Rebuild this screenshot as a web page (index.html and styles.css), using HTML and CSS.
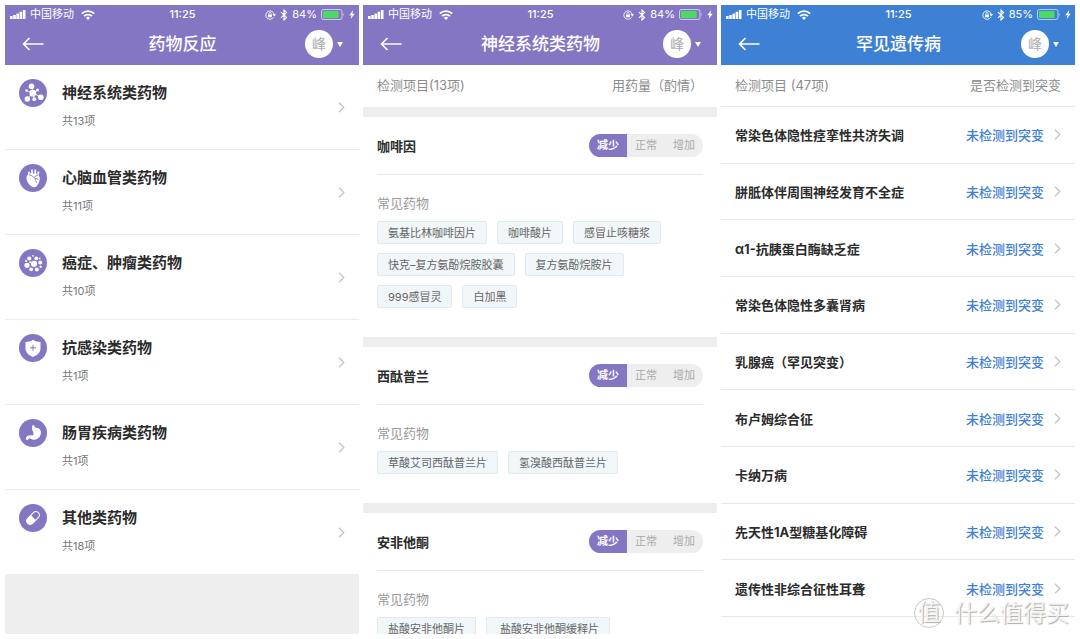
FILE: index.html
```html
<!DOCTYPE html>
<html lang="zh-CN">
<head>
<meta charset="utf-8">
<title>基因检测报告</title>
<link rel="stylesheet" href="styles.css">
</head>
<body>
<svg class="defs" aria-hidden="true">
  <symbol id="signal" viewBox="0 0 16 9"><path d="M0 6h2.600v3H0zM3.200 5h2.600v4H3.200zM6.400 3.500H9V9H6.400zM9.600 1.800h2.600V9H9.600zM12.900 0h2.600v9h-2.600z" fill="#fff"/></symbol>
  <symbol id="wifi" viewBox="0 0 14 10"><g fill="none" stroke="#fff" stroke-width="1.700"><path d="M.8 3.700a8.900 8.900 0 0 1 12.400 0"/><path d="M3 6.200a5.700 5.700 0 0 1 8 0"/></g><path d="M4.900 7.700a3 3 0 0 1 4.200 0L7 10z" fill="#fff"/></symbol>
  <symbol id="lock" viewBox="0 0 11 10"><path d="M8.700 7.200A4.200 4.200 0 1 1 9.200 4.500" fill="none" stroke="#fff" stroke-width=".9"/><path d="M7.500 4.300H11L9.300 6.500z" fill="#fff"/><path d="M3.100 4.600h3.800v2.700H3.100z" fill="#fff"/><path d="M3.900 4.700V3.600a1.100 1.100 0 0 1 2.200 0v1.100" fill="none" stroke="#fff" stroke-width=".8"/></symbol>
  <symbol id="bluetooth" viewBox="0 0 8 12"><path d="M1 3.200l5.600 5.300L4 11V1l2.600 2.500L1 8.800" fill="none" stroke="#fff" stroke-width="1.100"/></symbol>
  <symbol id="battery" viewBox="0 0 24 11"><rect x=".5" y=".5" width="20.500" height="10" rx="2" fill="none" stroke="#fff" stroke-opacity=".6"/><rect x="2" y="2" width="15.500" height="7" fill="#4cd964"/><path d="M22 4q1.500 1.500 0 3z" fill="#fff" fill-opacity=".7"/></symbol>
  <symbol id="bolt" viewBox="0 0 6 9"><path d="M4.300 0L.3 5.200h2.200L1.700 9l4-5.300H3.400z" fill="#fff"/></symbol>
  <symbol id="back" viewBox="0 0 22 14"><path d="M21.500 7H1.500M7.500 1l-6 6 6 6" fill="none" stroke="#fff" stroke-width="1.600"/></symbol>
  <symbol id="chevron" viewBox="0 0 7 11"><path d="M1 .8l4.800 4.700L1 10.200" fill="none" stroke="#c4c4c4" stroke-width="1.300"/></symbol>
  <symbol id="molecule" viewBox="0 0 28 28"><circle cx="14" cy="14" r="14"/><g fill="#fff" stroke="#fff"><path d="M13.800 14.200L12.500 7M13.800 14.200l9 4M13.800 14.200l-6 5.800M13.800 14.200l-6.300-2.600M13.800 14.200l5-3M13.800 14.200l1.500 6" fill="none" stroke-width=".8"/><g stroke="none"><circle cx="12.500" cy="7.200" r="2.800"/><circle cx="21.800" cy="18.200" r="2.800"/><circle cx="8.300" cy="20" r="2.700"/><circle cx="13.800" cy="14.200" r="3.400"/><circle cx="7.500" cy="11.500" r="1.300"/><circle cx="18.500" cy="11" r="1.500"/><circle cx="15.300" cy="20.200" r="1.900"/></g></g></symbol>
  <symbol id="heart" viewBox="0 0 28 28"><circle cx="14" cy="14" r="14"/><path d="M10 12V7.700M13 10V5.500M16.300 10V5.500M18.800 11.500l.8-4" fill="none" stroke="#fff" stroke-width="1.700"/><path d="M7.500 14c0-3.500 3.500-5 6-4.300 2.500-.7 6.500-.2 7.200 3.800.6 4-2.400 9.500-5.200 9.700-3.500.2-8-4.700-8-9.200z" fill="#fff"/><path d="M10 10.800c4.500.4 4.500 4.200 9.500 4.400M16.200 14.600c0 2.200 1.300 2.600 1.700 4.200M15.500 12.700l4-2" fill="none" stroke="#8576c3" stroke-width=".9"/></symbol>
  <symbol id="cells" viewBox="0 0 28 28"><circle cx="14" cy="14" r="14"/><g fill="#fff"><circle cx="10.300" cy="9.500" r="2.100"/><circle cx="17.300" cy="9.300" r="1.900"/><circle cx="14" cy="6.800" r=".9"/><circle cx="7" cy="12" r="1.100"/><circle cx="8" cy="16.300" r="2.600"/><circle cx="15" cy="14.800" r="3.100"/><circle cx="21.200" cy="13.500" r="2"/><circle cx="20.700" cy="9.500" r=".9"/><circle cx="12.200" cy="20.300" r="1.900"/><circle cx="17.800" cy="20.500" r="2"/><circle cx="21.600" cy="17.700" r="1.200"/><circle cx="11.200" cy="13.200" r="1"/></g></symbol>
  <symbol id="shield" viewBox="0 0 28 28"><circle cx="14" cy="14" r="14"/><path d="M14 5.800c2 1.500 4.500 2.200 7.500 2.200v6.500c0 4-3.500 6.900-7.500 8.500-4-1.600-7.500-4.500-7.500-8.500V8c3 0 5.500-.7 7.500-2.200z" fill="#fff"/><path d="M14 10.800v6M11 13.800h6" fill="none" stroke="#8576c3"/></symbol>
  <symbol id="stomach" viewBox="0 0 28 28"><circle cx="14" cy="14" r="14"/><path d="M13 6.700l2.300-.8c0 2 .9 2.900 3 3.100 3.600.4 4.300 4.300 3.100 7.300-1.600 4-6.300 5.500-9.400 3.700-1.700-.9-2.700-.4-3.300 1.300l-2-1c.4-3.700 2.800-4.600 5.200-4 2.500.5 3.200-1.200 2.200-3.600-1-1.800-1.300-3.500-1.100-6z" fill="#fff"/></symbol>
  <symbol id="pill" viewBox="0 0 28 28"><circle cx="14" cy="14" r="14"/><g transform="rotate(-45 14 14)"><rect x="6" y="10" width="16" height="8" rx="4" fill="#fff"/><path d="M14.500 11.100h3.700a2.900 2.900 0 0 1 0 5.800h-3.700z" fill="#8576c3"/></g></symbol>
</svg>

<main class="screens">
  <section class="screen">
    <header class="top">
      <div class="status"><div class="status-left"><svg class="i-signal"><use href="#signal"/></svg><span>中国移动</span><svg class="i-wifi"><use href="#wifi"/></svg></div><time>11:25</time><div class="status-right"><svg class="i-lock"><use href="#lock"/></svg><svg class="i-bt"><use href="#bluetooth"/></svg><span>84%</span><svg class="i-battery"><use href="#battery"/></svg><svg class="i-bolt"><use href="#bolt"/></svg></div></div>
      <div class="nav"><button class="back" aria-label="返回"><svg><use href="#back"/></svg></button><h1>药物反应</h1><button class="user"><span class="avatar">峰</span><span class="caret"></span></button></div>
    </header>
    <div class="categories">
      <a class="category" href="#"><svg class="badge"><use href="#molecule"/></svg><span class="copy"><strong>神经系统类药物</strong><small>共13项</small></span><svg class="chevron"><use href="#chevron"/></svg></a>
      <a class="category" href="#"><svg class="badge"><use href="#heart"/></svg><span class="copy"><strong>心脑血管类药物</strong><small>共11项</small></span><svg class="chevron"><use href="#chevron"/></svg></a>
      <a class="category" href="#"><svg class="badge"><use href="#cells"/></svg><span class="copy"><strong>癌症、肿瘤类药物</strong><small>共10项</small></span><svg class="chevron"><use href="#chevron"/></svg></a>
      <a class="category" href="#"><svg class="badge"><use href="#shield"/></svg><span class="copy"><strong>抗感染类药物</strong><small>共1项</small></span><svg class="chevron"><use href="#chevron"/></svg></a>
      <a class="category" href="#"><svg class="badge"><use href="#stomach"/></svg><span class="copy"><strong>肠胃疾病类药物</strong><small>共1项</small></span><svg class="chevron"><use href="#chevron"/></svg></a>
      <a class="category" href="#"><svg class="badge"><use href="#pill"/></svg><span class="copy"><strong>其他类药物</strong><small>共18项</small></span><svg class="chevron"><use href="#chevron"/></svg></a>
    </div>
    <div class="rest"></div>
  </section>

  <section class="screen">
    <header class="top">
      <div class="status"><div class="status-left"><svg class="i-signal"><use href="#signal"/></svg><span>中国移动</span><svg class="i-wifi"><use href="#wifi"/></svg></div><time>11:25</time><div class="status-right"><svg class="i-lock"><use href="#lock"/></svg><svg class="i-bt"><use href="#bluetooth"/></svg><span>84%</span><svg class="i-battery"><use href="#battery"/></svg><svg class="i-bolt"><use href="#bolt"/></svg></div></div>
      <div class="nav"><button class="back" aria-label="返回"><svg><use href="#back"/></svg></button><h1>神经系统类药物</h1><button class="user"><span class="avatar">峰</span><span class="caret"></span></button></div>
    </header>
    <div class="columns"><span>检测项目(13项)</span><span>用药量（酌情）</span></div>
    <article class="drug">
      <div class="drug-head"><h2>咖啡因</h2><div class="dose"><button class="on">减少</button><button>正常</button><button>增加</button></div></div>
      <h3>常见药物</h3>
      <ul class="tags"><li>氨基比林咖啡因片</li><li>咖啡酸片</li><li>感冒止咳糖浆</li><li>快克–复方氨酚烷胺胶囊</li><li>复方氨酚烷胺片</li><li>999感冒灵</li><li>白加黑</li></ul>
    </article>
    <article class="drug">
      <div class="drug-head"><h2>西酞普兰</h2><div class="dose"><button class="on">减少</button><button>正常</button><button>增加</button></div></div>
      <h3>常见药物</h3>
      <ul class="tags"><li>草酸艾司西酞普兰片</li><li>氢溴酸西酞普兰片</li></ul>
    </article>
    <article class="drug">
      <div class="drug-head"><h2>安非他酮</h2><div class="dose"><button class="on">减少</button><button>正常</button><button>增加</button></div></div>
      <h3>常见药物</h3>
      <ul class="tags"><li>盐酸安非他酮片</li><li>&nbsp;盐酸安非他酮缓释片</li></ul>
    </article>
  </section>

  <section class="screen blue">
    <header class="top">
      <div class="status"><div class="status-left"><svg class="i-signal"><use href="#signal"/></svg><span>中国移动</span><svg class="i-wifi"><use href="#wifi"/></svg></div><time>11:25</time><div class="status-right"><svg class="i-lock"><use href="#lock"/></svg><svg class="i-bt"><use href="#bluetooth"/></svg><span>85%</span><svg class="i-battery"><use href="#battery"/></svg><svg class="i-bolt"><use href="#bolt"/></svg></div></div>
      <div class="nav"><button class="back" aria-label="返回"><svg><use href="#back"/></svg></button><h1>罕见遗传病</h1><button class="user"><span class="avatar">峰</span><span class="caret"></span></button></div>
    </header>
    <div class="columns ruled"><span>检测项目 (47项)</span><span>是否检测到突变</span></div>
    <div class="diseases">
      <a class="disease" href="#"><strong>常染色体隐性痉挛性共济失调</strong><span>未检测到突变</span><svg class="chevron"><use href="#chevron"/></svg></a>
      <a class="disease" href="#"><strong>胼胝体伴周围神经发育不全症</strong><span>未检测到突变</span><svg class="chevron"><use href="#chevron"/></svg></a>
      <a class="disease" href="#"><strong>α1-抗胰蛋白酶缺乏症</strong><span>未检测到突变</span><svg class="chevron"><use href="#chevron"/></svg></a>
      <a class="disease" href="#"><strong>常染色体隐性多囊肾病</strong><span>未检测到突变</span><svg class="chevron"><use href="#chevron"/></svg></a>
      <a class="disease" href="#"><strong>乳腺癌（罕见突变）</strong><span>未检测到突变</span><svg class="chevron"><use href="#chevron"/></svg></a>
      <a class="disease" href="#"><strong>布卢姆综合征</strong><span>未检测到突变</span><svg class="chevron"><use href="#chevron"/></svg></a>
      <a class="disease" href="#"><strong>卡纳万病</strong><span>未检测到突变</span><svg class="chevron"><use href="#chevron"/></svg></a>
      <a class="disease" href="#"><strong>先天性1A型糖基化障碍</strong><span>未检测到突变</span><svg class="chevron"><use href="#chevron"/></svg></a>
      <a class="disease" href="#"><strong>遗传性非综合征性耳聋</strong><span>未检测到突变</span><svg class="chevron"><use href="#chevron"/></svg></a>
    </div>
  </section>
</main>
<div class="watermark"><span class="seal">值</span><span>什么值得买</span></div>
</body>
</html>
```
FILE: styles.css
```css
* { box-sizing: border-box; }
body {
  position: relative;
  margin: 0;
  height: 100vh;
  padding: 5px;
  background: #fff;
  font-family: Inter, "Noto Sans CJK SC", sans-serif;
  font-size: 13px;
  color: #2b2b2b;
}
.defs { position: absolute; width: 0; height: 0; }
svg { display: block; flex: none; }
h1, h2, h3, ul { margin: 0; padding: 0; }
button { border: 0; padding: 0; background: none; font: inherit; color: inherit; }
a { color: inherit; text-decoration: none; }

.screens { display: grid; grid-template-columns: repeat(3, 1fr); gap: 4px; height: 100%; }
.screen { --main: #8576c3; display: flex; flex-direction: column; min-width: 0; min-height: 0; overflow: hidden; }
.screen > * { flex: none; }
.blue { --main: #3e80d3; }

.top { background: var(--main); color: #fff; }
.status, .nav { display: grid; grid-template-columns: 1fr auto 1fr; align-items: center; }
.status { height: 19px; padding: 0 4px 0 5px; font-size: 11px; line-height: 19px; }
.status time { font-weight: 500; }
.status-left, .status-right { display: flex; align-items: center; }
.status-left { gap: 4px; }
.status-right { justify-content: flex-end; gap: 4px; }
.i-signal { width: 16px; height: 9px; }
.i-wifi { width: 14px; height: 10px; margin-left: 3px; }
.i-lock { width: 11px; height: 10px; }
.i-bt { width: 8px; height: 12px; }
.i-battery { width: 24px; height: 11px; }
.i-bolt { width: 6px; height: 9px; }

.nav { height: 41px; padding: 0 16px 1px 17px; }
.nav h1 { font-size: 17px; font-weight: 500; line-height: 24px; }
.back { justify-self: start; }
.back svg { width: 22px; height: 14px; }
.user { justify-self: end; display: flex; align-items: center; gap: 4px; }
.avatar { width: 28px; height: 28px; border-radius: 50%; background: #fff; color: #aaa; font-size: 14px; line-height: 28px; }
.caret { border: 3px solid transparent; border-top: 5px solid #fff; border-bottom: 0; }

.category { display: flex; align-items: flex-start; gap: 15px; padding: 14px; border-bottom: 1px solid #ececec; }
.category:last-child { border-bottom: 0; }
.badge { width: 28px; height: 28px; fill: var(--main); }
.copy { flex: 1; line-height: 28px; }
.copy strong, .copy small { display: block; }
.copy strong { font-size: 15px; font-weight: 700; }
.copy small { font-size: 11px; color: #777; }
.chevron { width: 7px; height: 11px; }
.category .chevron { align-self: center; }
.screen .rest { flex: 1; background: #eee; }

.columns { display: flex; justify-content: space-between; height: 42px; padding: 0 14px; line-height: 41px; color: #8c8c8c; }
.ruled { border-bottom: 1px solid #e8e8e8; }
.drug { border-top: 10px solid #eee; padding: 0 14px 29px; }
.drug-head { display: flex; align-items: center; justify-content: space-between; height: 58px; border-bottom: 1px solid #e8e8e8; }
.drug h2 { font-size: 13px; font-weight: 700; }
.dose { display: flex; border-radius: 12px; overflow: hidden; background: #eee; color: #aaa; }
.dose button { width: 38px; height: 23px; font-size: 11px; line-height: 23px; }
.dose .on { background: var(--main); color: #fff; font-weight: 700; }
.drug h3 { padding-top: 17px; font-size: 13px; font-weight: 400; line-height: 22px; color: #999; }
.tags { display: flex; flex-wrap: wrap; gap: 9px 10px; padding-top: 7px; list-style: none; }
.tags li { height: 23px; padding: 0 10px; border: 1px solid #e3eaed; border-radius: 2px; background: #f1f6f9; font-size: 11px; line-height: 22px; color: #666; }

.screen .diseases { flex: 1; display: grid; grid-auto-rows: 1fr; padding-bottom: 17px; }
.disease { display: flex; align-items: center; gap: 10px; padding: 0 14px; border-bottom: 1px solid #e8e8e8; }
.disease strong { flex: 1; font-weight: 700; }
.disease span { color: var(--main); font-weight: 500; }

.watermark { position: absolute; right: 11px; bottom: 9px; display: flex; align-items: center; gap: 10px; font-size: 23px; line-height: 34px; color: #f4f4f4; text-shadow: 1px 1px 1px #aaa; }
.seal { width: 30px; height: 30px; border: 1px solid #c8c8c8; border-radius: 50%; line-height: 26px; text-align: center; }
```
